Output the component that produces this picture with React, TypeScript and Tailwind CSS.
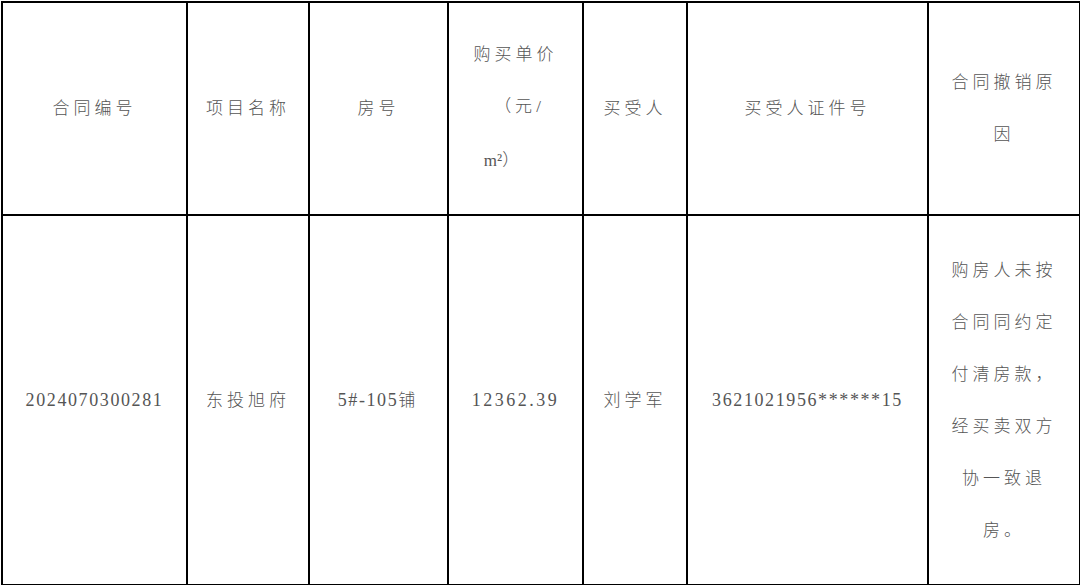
import React from "react";

const Lat = ({ children, t = "tracking-[2px]" }: { children: React.ReactNode; t?: string }) => (
  <span className={`[font-family:'Liberation_Serif',serif] font-normal ${t}`}>{children}</span>
);

export default function App() {
  const base =
    "border-2 border-black align-middle text-center font-light text-[17px] leading-[52px] tracking-[4px] text-[#555] px-0 pt-0 [font-family:'Noto_Sans_CJK_SC',sans-serif]";
  const th = `${base} pb-[4px]`;
  const td = `${base} pb-[2px]`;
  return (
    <div className="w-[1080px] h-[585px] bg-white overflow-hidden p-[1px]">
      <table className="w-[1078px] h-[583px] border-collapse table-fixed">
        <colgroup>
          <col className="w-[185px]" />
          <col className="w-[122px]" />
          <col className="w-[139px]" />
          <col className="w-[135px]" />
          <col className="w-[104px]" />
          <col className="w-[241px]" />
          <col className="w-[152px]" />
        </colgroup>
        <tbody>
          <tr className="h-[213px]">
            <td className={th}>合同编号</td>
            <td className={th}>项目名称</td>
            <td className={th}>房号</td>
            <td className={th}>
              购买单价
              <br />
              <span className="pl-[4px]">（元<Lat t="tracking-normal">/</Lat></span>
              <br />
              <span className="pr-[24px]">
                <Lat t="tracking-normal">m²</Lat>）
              </span>
            </td>
            <td className={th}>买受人</td>
            <td className={th}>买受人证件号</td>
            <td className={th}>
              合同撤销原
              <br />因
            </td>
          </tr>
          <tr className="h-[370px]">
            <td className={`${td} text-[18px]`}>
              <Lat t="tracking-[1.6px]">2024070300281</Lat>
            </td>
            <td className={td}>东投旭府</td>
            <td className={td}>
              <span className="text-[18px]"><Lat t="tracking-[1.6px]">5#-105</Lat></span>铺
            </td>
            <td className={`${td} text-[18px]`}>
              <Lat t="tracking-[2.5px]">12362.39</Lat>
            </td>
            <td className={td}>刘学军</td>
            <td className={`${td} text-[18px]`}>
              <Lat t="tracking-[1.6px]">3621021956******15</Lat>
            </td>
            <td className={td}>
              购房人未按
              <br />
              合同同约定
              <br />
              付清房款，
              <br />
              经买卖双方
              <br />
              协一致退
              <br />
              房。
            </td>
          </tr>
        </tbody>
      </table>
    </div>
  );
}
